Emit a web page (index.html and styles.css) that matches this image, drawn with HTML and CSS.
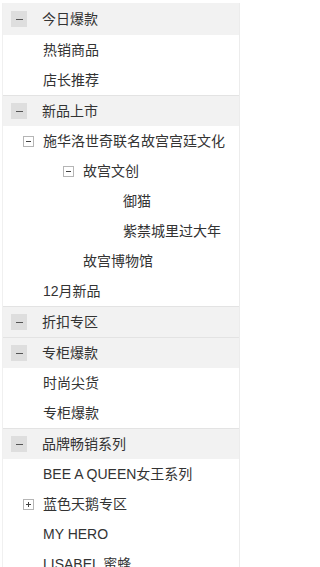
FILE: index.html
```html
<!DOCTYPE html>
<html lang="zh-CN">
<head>
<meta charset="utf-8">
<title>分类树</title>
<link rel="stylesheet" href="styles.css">
</head>
<body>
<div class="tree">
  <section class="group">
    <div class="group-head"><span class="toggle"></span><span class="label">今日爆款</span></div>
    <ul class="nodes">
      <li class="node lv1"><span class="switch"></span><span class="label">热销商品</span></li>
      <li class="node lv1"><span class="switch"></span><span class="label">店长推荐</span></li>
    </ul>
  </section>
  <section class="group">
    <div class="group-head"><span class="toggle"></span><span class="label">新品上市</span></div>
    <ul class="nodes">
      <li class="node lv1"><span class="switch open"></span><span class="label">施华洛世奇联名故宫宫廷文化</span></li>
      <li class="node lv2"><span class="switch open"></span><span class="label">故宫文创</span></li>
      <li class="node lv3"><span class="switch"></span><span class="label">御猫</span></li>
      <li class="node lv3"><span class="switch"></span><span class="label">紫禁城里过大年</span></li>
      <li class="node lv2"><span class="switch"></span><span class="label">故宫博物馆</span></li>
      <li class="node lv1"><span class="switch"></span><span class="label">12月新品</span></li>
    </ul>
  </section>
  <section class="group">
    <div class="group-head"><span class="toggle"></span><span class="label">折扣专区</span></div>
  </section>
  <section class="group">
    <div class="group-head"><span class="toggle"></span><span class="label">专柜爆款</span></div>
    <ul class="nodes">
      <li class="node lv1"><span class="switch"></span><span class="label">时尚尖货</span></li>
      <li class="node lv1"><span class="switch"></span><span class="label">专柜爆款</span></li>
    </ul>
  </section>
  <section class="group">
    <div class="group-head"><span class="toggle"></span><span class="label">品牌畅销系列</span></div>
    <ul class="nodes">
      <li class="node lv1"><span class="switch"></span><span class="label">BEE A QUEEN女王系列</span></li>
      <li class="node lv1"><span class="switch closed"></span><span class="label">蓝色天鹅专区</span></li>
      <li class="node lv1"><span class="switch"></span><span class="label">MY HERO</span></li>
      <li class="node lv1"><span class="switch"></span><span class="label">LISABEL 蜜蜂</span></li>
    </ul>
  </section>
</div>
</body>
</html>
```

FILE: styles.css
```css
html, body {
  margin: 0;
  padding: 0;
  background: #fff;
}

body {
  font-family: "Liberation Sans", "Noto Sans CJK SC", sans-serif;
  font-size: 14px;
  color: #333;
}

.tree {
  box-sizing: border-box;
  width: 238px;
  margin: 3px 0 0 2px;
  border-left: 1px solid #f0f0f0;
  border-right: 1px solid #ececec;
}

.group + .group {
  border-top: 1px solid #e3e3e3;
}

.group-head {
  display: flex;
  align-items: center;
  height: 30px;
  padding-left: 8px;
  background: #f2f2f2;
}

.group:first-child .group-head {
  height: 32px;
}

.toggle {
  position: relative;
  flex: none;
  width: 16px;
  height: 16px;
  margin-right: 15px;
  background: #dedede;
}

.toggle::before {
  content: "";
  position: absolute;
  left: 5px;
  top: 8px;
  width: 7px;
  height: 1px;
  background: #555;
}

.nodes {
  list-style: none;
  margin: 0;
  padding: 0;
}

.node {
  display: flex;
  align-items: center;
  height: 30px;
  white-space: nowrap;
}

.lv1 { padding-left: 20px; }
.lv2 { padding-left: 60px; }
.lv3 { padding-left: 100px; }

.switch {
  position: relative;
  flex: none;
  width: 20px;
  height: 11px;
}

.switch.open::before,
.switch.closed::before {
  content: "";
  position: absolute;
  left: 0;
  top: 0;
  box-sizing: border-box;
  width: 11px;
  height: 11px;
  border: 1px solid #b5b5b5;
}

.switch.open::after,
.switch.closed::after {
  content: "";
  position: absolute;
  left: 3px;
  top: 5px;
  width: 5px;
  height: 1px;
  background: #444;
}

.switch.closed {
  background: linear-gradient(#444, #444) 5px 3px / 1px 5px no-repeat;
}

.label {
  line-height: 20px;
}
```
